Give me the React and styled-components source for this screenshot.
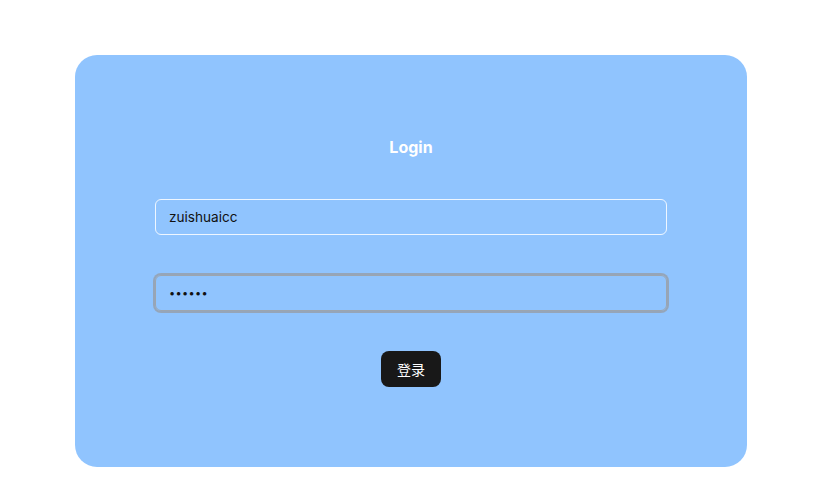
import React from "react";
import styled, { createGlobalStyle } from "styled-components";

const Global = createGlobalStyle`
  html, body { margin: 0; padding: 0; background: #ffffff; }
  body { font-family: Inter, "Noto Sans CJK SC", system-ui, sans-serif; }
  * { box-sizing: border-box; }
`;

const Page = styled.div`
  width: 820px;
  height: 489px;
  padding-top: 55px;
  padding-left: 75px;
`;

const Card = styled.form`
  width: 672px;
  height: 412px;
  background: #90c4fe;
  border-radius: 22px;
  padding: 80px 80px;
  display: flex;
  flex-direction: column;
  align-items: center;
  gap: 40px;
`;

const Title = styled.h1`
  margin: 0;
  font-family: Inter, sans-serif;
  font-size: 16px;
  line-height: 24px;
  font-weight: 700;
  color: #ffffff;
`;

const Field = styled.input`
  width: 512px;
  height: 36px;
  border-radius: 6px;
  padding: 0 13px;
  font-family: Inter, sans-serif;
  font-size: ${(p) => (p.type === "password" ? "11px" : "13.6px")};
  letter-spacing: ${(p) => (p.type === "password" ? "0.3px" : "0")};
  color: #111111;
  background: transparent;
  outline: none;
  border: 1px solid ${(p) => (p.$active ? "#9ca5af" : "rgba(255,255,255,0.85)")};
  box-shadow: ${(p) => (p.$active ? "0 0 0 2px rgba(150,158,168,0.8)" : "none")};
`;

const Button = styled.button`
  height: 36px;
  padding: 0 16px;
  border: none;
  border-radius: 8px;
  background: #181818;
  color: #ffffff;
  font-family: "Noto Sans CJK SC", sans-serif;
  font-size: 14px;
  cursor: pointer;
`;

export default function App() {
  return (
    <Page>
      <Global />
      <Card onSubmit={(e) => e.preventDefault()}>
        <Title>Login</Title>
        <Field type="text" defaultValue="zuishuaicc" />
        <Field type="password" defaultValue="123456" $active />
        <Button type="submit">登录</Button>
      </Card>
    </Page>
  );
}
